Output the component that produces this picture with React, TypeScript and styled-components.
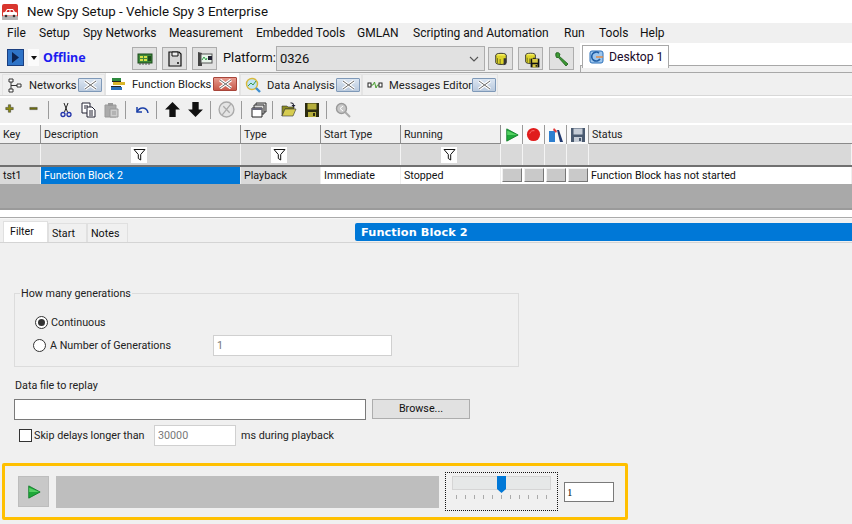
import React from "react";
import styled, { createGlobalStyle } from "styled-components";

const Global = createGlobalStyle`
  html, body { margin: 0; padding: 0; background: #f0f0f0; }
  body { width: 852px; height: 524px; overflow: hidden; font-family: Roboto, "Noto Sans", "Liberation Sans", sans-serif; font-size: 11px; color: #111; }
  * { box-sizing: border-box; }
`;

const Page = styled.div`width: 852px; height: 524px; display: flex; flex-direction: column; overflow: hidden; background: #f0f0f0;`;
const TitleBar = styled.div`height: 23px; background: #fff; display: flex; align-items: center; padding-left: 2px; gap: 9px; font-size: 13.3px; color: #111;`;
const Menu = styled.div`height: 20px; display: flex; align-items: center; padding-left: 7px; font-size: 12px; background: #f0f0f0;`;
const MenuItem = styled.span<{ $w: number }>`width: ${p => p.$w}px; white-space: nowrap;`;

const MainBar = styled.div`height: 30px; position: relative; display: flex; background: #f0f0f0; border-bottom: 1px solid #a8a8a8;`;
const MainLeft = styled.div`width: 580px; display: flex; align-items: flex-start; padding: 3px 0 0 7px;`;
const PlayBox = styled.div`width: 17px; height: 17px; margin-top: 3px; background: #2f74c8; border: 1px solid #1b3f80; display: flex; align-items: center; justify-content: center;`;
const Drop = styled.div`width: 11px; height: 17px; margin: 3px 0 0 4px; background: #fbfbfb; display: flex; align-items: center; justify-content: center;`;
const Caret = styled.span`width: 0; height: 0; border: 3.5px solid transparent; border-top: 4px solid #111; border-bottom: 0;`;
const Offline = styled.span`font: bold 12.5px "Noto Sans", sans-serif; color: #1c1cf0; margin: 3px 0 0 4px; width: 89px; line-height: 18px;`;
const ToolBtn = styled.div<{ $ml?: number }>`width: 25px; height: 23px; margin-left: ${p => p.$ml ?? 5}px; margin-top: 1px; background: #e1e1e1; border: 1px solid #adadad; display: flex; align-items: center; justify-content: center;`;
const Platform = styled.span`font-size: 12.8px; margin: 3px 1px 0 6px; line-height: 18px; width: 52px; white-space: nowrap;`;
const Select = styled.div`width: 209px; height: 25px; background: #e1e1e1; border: 1px solid #adadad; display: flex; align-items: center; justify-content: space-between; padding: 0 5px 0 3px; font-size: 13px; flex-shrink: 0;`;
const DesktopArea = styled.div`flex: 1; display: flex; flex-direction: column;`;
const DesktopRow = styled.div`height: 23px; display: flex; background: #fff; border-bottom: 1px solid #a8a8a8; padding-left: 2px;`;
const DesktopTab = styled.div`width: 87px; height: 23px; margin-top: 2px; background: #fff; border: 1px solid #a8a8a8; border-bottom: 0; display: flex; align-items: center; gap: 4px; padding-left: 6px; font-size: 12.2px; color: #1a0a2a; white-space: nowrap;`;
const DesktopStep = styled.div`flex: 1; border-left: 1px solid #a8a8a8; height: 6px;`;

const TabStrip = styled.div`height: 23px; display: flex; align-items: flex-end; padding-left: 2px; background: #f0f0f0; border-bottom: 1px solid #d8d8d8;`;
const WinTab = styled.div<{ $w: number; $active?: boolean }>`width: ${p => p.$w}px; height: ${p => p.$active ? 23 : 21}px; display: flex; align-items: center; padding-left: 4px; background: ${p => p.$active ? "#fff" : "#f0f0f0"}; border: 1px solid #e4e4e4; border-bottom: 0; font-size: 11.2px; white-space: nowrap; color: #222;`;
const TabLabel = styled.span<{ $w: number }>`width: ${p => p.$w}px; padding-left: 6px;`;
const CloseX = styled.span<{ $red?: boolean }>`width: 24px; height: 14px; border: 1px solid ${p => p.$red ? "#a8453a" : "#7f99b8"}; border-radius: 1px; background: ${p => p.$red ? "linear-gradient(#e69a8e,#c7584a)" : "linear-gradient(#dbe5f1,#b9c9dd)"}; display: flex; align-items: center; justify-content: center;`;
const Spacer = styled.div`height: 2px; background: #fff;`;

const IconBar = styled.div`height: 25px; display: flex; align-items: center; background: #f0f0f0; padding-bottom: 2px;`;
const IconSlot = styled.div<{ $w?: number }>`width: ${p => p.$w ?? 23}px; display: flex; align-items: center; justify-content: center; height: 22px;`;
const Sep = styled.div<{ $ml?: number; $mr: number }>`width: 1px; height: 18px; background: #9a9a9a; margin: 0 ${p => p.$mr}px 0 ${p => p.$ml ?? 0}px;`;
const WhiteLine = styled.div`height: 2px; background: #fff;`;

const cols = "41px 200px 80px 80px 100px 22px 22px 22px 22px 1fr";
const Grid = styled.div`display: grid; grid-template-columns: ${cols};`;
const HeadRow = styled(Grid)`height: 19px; background: #f0f0f0; border-bottom: 1px solid #8a8a8a;`;
const HeadCell = styled.div`border-right: 1px solid #8f8f8f; padding: 1px 0 0 3px; line-height: 18px; font-size: 10.7px; color: #222; display: flex; align-items: center;`;
const StatusHead = styled(HeadCell)`border-right: 0;`;
const IconHead = styled(HeadCell)`padding: 0; justify-content: center; background: #fafafa; border-right: 1px solid #9a9a9a;`;
const FilterRow = styled(Grid)`height: 23px; background: #d9d9d9; border-bottom: 2px solid #707070;`;
const FilterCell = styled.div`border-right: 1px solid #f4f4f4; display: flex; align-items: center; justify-content: center; padding-right: 3px;`;
const FilterBtn = styled.div`width: 16px; height: 16px; background: #fff; display: flex; align-items: center; justify-content: center;`;
const DataRow = styled(Grid)`height: 17px; background: #fff; border-bottom: 1px solid #707070;`;
const DataCell = styled.div<{ $bg?: string; $fg?: string }>`background: ${p => p.$bg ?? "#fff"}; color: ${p => p.$fg ?? "#111"}; border-right: 1px solid #eee; padding: 1px 0 0 3px; line-height: 16px; font-size: 10.7px; white-space: nowrap;`;
const StatusCell = styled(DataCell)`padding-left: 2px;`;
const BtnCell = styled.div`background: #fff; display: flex; padding: 1px;`;
const RowBtn = styled.div`flex: 1; height: 14px; background: #c9c9c9; border: 1px solid; border-color: #f0f0f0 #777 #777 #f0f0f0;`;
const GrayFill = styled.div`height: 26px; background: #a9a9a9; border-bottom: 2px solid #9a9a9a;`;
const WhiteGap = styled.div`height: 7px; background: #fff;`;
const Divider = styled.div`height: 1px; background: #aaa;`;
const WhiteGap2 = styled.div`height: 1px; background: #f7f7f7;`;

const LowerTabs = styled.div`height: 23px; display: flex; align-items: flex-end; padding-left: 3px;`;
const LowerTab = styled.div<{ $w: number; $active?: boolean }>`width: ${p => p.$w}px; height: ${p => p.$active ? 21 : 19}px; background: ${p => p.$active ? "#fff" : "#f0f0f0"}; border: 1px solid #e0e0e0; border-bottom: 0; font-size: 10.7px; display: flex; align-items: center; padding-left: ${p => p.$active ? 6 : 3}px; color: #111; padding-bottom: ${p => p.$active ? 1 : 0}px;`;
const BlueTitle = styled.div`margin-left: 227px; margin-bottom: 1px; flex: 1; height: 18px; background: #0078d7; border-radius: 2px 0 0 2px; color: #fff; font: bold 11.3px "DejaVu Sans", sans-serif; padding-left: 6px; line-height: 19px; letter-spacing: 0.1px;`;
const TabLine = styled.div`height: 1px; background: #d4d4d4;`;

const Body = styled.div`flex: 1; padding: 43px 0 0 0; display: flex; flex-direction: column;`;
const Group = styled.fieldset`margin: 0 0 0 14px; width: 505px; height: 81px; border: 1px solid #dcdcdc; padding: 0;`;
const Legend = styled.legend`margin-left: 5px; padding: 1px 1px 0; font-size: 10.75px; line-height: 14px; color: #222;`;
const RadioRow = styled.div<{ $mt: number; $ml: number }>`display: flex; align-items: center; margin: ${p => p.$mt}px 0 0 ${p => p.$ml}px; height: 22px; font-size: 10.75px; color: #222;`;
const Radio = styled.span`width: 13px; height: 13px; border-radius: 50%; border: 1px solid #333; background: #fff; display: flex; align-items: center; justify-content: center; margin-right: 3px; flex-shrink: 0;`;
const Dot = styled.span`width: 7px; height: 7px; border-radius: 50%; background: #333;`;
const GenLabel = styled.span`width: 164px; padding-left: 1px;`;
const GrayInput = styled.div<{ $w: number; $h: number }>`width: ${p => p.$w}px; height: ${p => p.$h}px; background: #fff; border: 1px solid #d0d0d0; color: #777; font-size: 10.75px; padding-left: 3px; line-height: ${p => p.$h - 2}px; flex-shrink: 0;`;
const FileLabel = styled.div`margin: 11px 0 0 15px; padding-top: 1px; font-size: 10.75px; line-height: 14px; color: #222; height: 21px;`;
const FileRow = styled.div`display: flex; margin-left: 14px; gap: 6px;`;
const FileInput = styled.div`width: 352px; height: 21px; background: #fff; border: 1px solid #7a7a7a;`;
const Browse = styled.div`width: 98px; height: 20px; background: #e1e1e1; border: 1px solid #adadad; text-align: center; font-size: 10.75px; line-height: 18px; color: #111;`;
const SkipRow = styled.div`display: flex; align-items: center; margin: 4px 0 0 19px; height: 22px; font-size: 10.75px; color: #222;`;
const Check = styled.span`width: 13px; height: 13px; background: #fff; border: 1px solid #333; margin-right: 2px;`;
const SkipLabel = styled.span`width: 120px;`;
const MsLabel = styled.span`margin-left: 5px;`;

const Player = styled.div`margin: 17px 0 0 2px; width: 626px; height: 57px; border: 3px solid #ffc000; border-radius: 2px; display: flex; align-items: center; padding-left: 13px;`;
const PlayBtn = styled.div`width: 31px; height: 31px; background: #c8c8c8; border: 1px solid #bdbdbd; display: flex; align-items: center; justify-content: center;`;
const Progress = styled.div`width: 383px; height: 32px; margin-left: 7px; background: #bebebe;`;
const SliderBox = styled.div`width: 113px; height: 39px; margin-left: 6px; border: 1px dotted #111; padding: 3px 6px; position: relative;`;
const Track = styled.div`height: 14px; background: #e6e8e8; border: 1px solid #d5d5d5; margin-bottom: 5px;`;
const Thumb = styled.svg`position: absolute; left: 51px; top: 3px;`;
const Ticks = styled.div`display: flex; justify-content: space-between; padding: 0 4px;`;
const Tick = styled.span`width: 1px; height: 4px; background: #aaa;`;
const Num = styled.div`width: 50px; height: 20px; margin-left: 6px; background: #fff; border: 1px solid #7a7a7a; padding-left: 2px; font: 11px "Liberation Serif", serif; line-height: 18px; color: #111;`;
const Stack = styled.span`display: flex; position: relative;`;
const MiniDisk = styled.span`position: absolute; right: -3px; bottom: -3px; display: flex;`;

const I = ({ s = 16, children }: { s?: number; children: React.ReactNode }) => (
  <svg width={s} height={s} viewBox="0 0 16 16">{children}</svg>
);
const XIcon = () => (
  <svg width="15" height="10" viewBox="0 0 15 10"><path d="M2 1 L13 9 M13 1 L2 9" stroke="#fff" strokeWidth="3.2" /><path d="M2 1 L13 9 M13 1 L2 9" stroke="#6a6a6a" strokeWidth="1" /></svg>
);
const Disk = ({ c = "#111", f = "#b9b08a", s = 16 }: { c?: string; f?: string; s?: number }) => (
  <I s={s}><path d="M1 1h14v14H1z" fill={c} /><path d="M3.5 1.5h9v6h-9z" fill={f} /><path d="M4 10h8v5H4z" fill={f} /><path d="M9 11h2v3H9z" fill={c} /></I>
);
const Drum = ({ s = 14 }: { s?: number }) => (
  <I s={s}><ellipse cx="8" cy="4" rx="6" ry="2.5" fill="#f5ee60" stroke="#222" /><path d="M2 4v8c0 3 12 3 12 0V4" fill="#dcd32a" stroke="#222" /><path d="M4 7v6M7 8v6" stroke="#6a6a20" /><path d="M11 7h3v7l-3 1z" fill="#333" /></I>
);
const Funnel = () => (
  <svg width="13" height="13" viewBox="0 0 13 13"><path d="M1 1.5h11L7.7 6.5V12L5.3 10.5v-4z" fill="#fff" stroke="#111" /></svg>
);
const GreenPlay = ({ s = 14 }: { s?: number }) => (
  <I s={s}><path d="M2 1 L15 8 L2 15z" fill="#1fa83a" stroke="#0f7d28" /><path d="M2.5 3 L2.5 8 L14 8z" fill="#54d062" /></I>
);

export default function App() {
  const menu: [string, number][] = [["File", 32], ["Setup", 44], ["Spy Networks", 86], ["Measurement", 87], ["Embedded Tools", 101], ["GMLAN", 56], ["Scripting and Automation", 151], ["Run", 35], ["Tools", 41], ["Help", 40]];
  return (
    <Page>
      <Global />
      <TitleBar>
        <svg width="16" height="16" viewBox="0 0 16 16"><rect width="16" height="16" rx="2" fill="#d9362e" /><rect x="0" y="12" width="16" height="4" rx="1" fill="#b5b5b5" /><path d="M1 11.5V8.5l2-.5 2-3h6l2 3 2 .5v3z" fill="#fff" /><path d="M5.5 6h2v2h-3zM8.5 6h2l1 2h-3z" fill="#c22" /><circle cx="4" cy="12" r="1.3" fill="#333" /><circle cx="12" cy="12" r="1.3" fill="#333" /></svg>
        <span>New Spy Setup - Vehicle Spy 3 Enterprise</span>
      </TitleBar>
      <Menu>{menu.map(([m, w]) => <MenuItem key={m} $w={w}>{m}</MenuItem>)}</Menu>
      <MainBar>
        <MainLeft>
          <PlayBox><svg width="9" height="11" viewBox="0 0 9 11"><path d="M1 0l7 5.5L1 11z" fill="#0d2350" /></svg></PlayBox>
          <Drop><Caret /></Drop>
          <Offline>Offline</Offline>
          <ToolBtn $ml={0}>
            <I><rect x="1" y="3" width="14" height="9" fill="#3f8a3a" stroke="#1d4a1d" /><path d="M3 5h3v2H3zM7 5h3v2H7zM3 8h3v2H3zM7 8h3v2H7z" fill="#d7e04a" /><path d="M11 5h3v5h-3z" fill="#1d4a1d" /><path d="M3 12v2M6 12v2M9 12v2M12 12v2" stroke="#555" /></I>
          </ToolBtn>
          <ToolBtn>
            <I><path d="M2 1h10l2 2v12H2z" fill="#d6d6d6" stroke="#111" strokeWidth="1.2" /><path d="M5 1h6v4H5z" fill="#eee" stroke="#111" /><circle cx="11" cy="12" r="1" fill="#111" /></I>
          </ToolBtn>
          <ToolBtn>
            <I><path d="M1 1l4 1v13l-4 0z" fill="#444" /><rect x="4" y="3" width="11" height="9" fill="#e8f3ea" stroke="#555" /><path d="M5 9l2-3 2 3 1-2" stroke="#2aa044" fill="none" /><rect x="11" y="5" width="4" height="4" fill="#223" /></I>
          </ToolBtn>
          <Platform>Platform:</Platform>
          <Select>
            <span>0326</span>
            <svg width="10" height="6" viewBox="0 0 10 6"><path d="M1 1l4 4 4-4" fill="none" stroke="#555" strokeWidth="1.1" /></svg>
          </Select>
          <ToolBtn $ml={3}><Drum /></ToolBtn>
          <ToolBtn><Stack><Drum s={13} /><MiniDisk><Disk s={10} c="#111" f="#d8c840" /></MiniDisk></Stack></ToolBtn>
          <ToolBtn $ml={6}>
            <I><path d="M2 2c2-1 4 0 4 2l-1 1 9 8-2 2-8-9-1 1C3 7 1 5 2 2z" fill="#3d9a34" stroke="#1d5a1a" strokeWidth="0.8" /></I>
          </ToolBtn>
        </MainLeft>
        <DesktopArea>
          <DesktopRow>
            <DesktopTab>
              <I><rect x="1" y="2" width="13" height="12" rx="2" fill="#9cc6ee" stroke="#2a6fb8" /><path d="M10 4a4.5 4.5 0 1 0 1 6" fill="none" stroke="#1f5ea5" strokeWidth="1.6" /><path d="M7 8h7" stroke="#e9883a" strokeWidth="1.4" /></I>
              Desktop 1
            </DesktopTab>
          </DesktopRow>
          <DesktopStep />
        </DesktopArea>
      </MainBar>
      <TabStrip>
        <WinTab $w={103}>
          <I><path d="M2 2h4v3H2zM10 7h4v3h-4zM2 12h4v3H2z" fill="#fff" stroke="#333" /><path d="M4 5v7M4 8.5h6" stroke="#333" fill="none" /></I>
          <TabLabel $w={55}>Networks</TabLabel><CloseX><XIcon /></CloseX>
        </WinTab>
        <WinTab $w={135} $active>
          <I><path d="M2 2h9v3H2z" fill="#2d8a3e" /><path d="M3 6h12v3H3z" fill="#d9b52a" /><path d="M1 11h11v3H1z" fill="#2a6fb8" /><path d="M2 5h9v1H2zM1 10h10v1H1z" fill="#222" /></I>
          <TabLabel $w={87}>Function Blocks</TabLabel><CloseX $red><XIcon /></CloseX>
        </WinTab>
        <WinTab $w={122}>
          <I><circle cx="7" cy="7" r="5.5" fill="#bfe3f5" stroke="#d7b93c" strokeWidth="1.4" /><path d="M3 9l3-3 2 2 3-4" stroke="#3a9a4a" fill="none" /><path d="M11 11l4 4" stroke="#3d8fd0" strokeWidth="2.4" /></I>
          <TabLabel $w={75}>Data Analysis</TabLabel><CloseX><XIcon /></CloseX>
        </WinTab>
        <WinTab $w={136}>
          <I><path d="M4 8h2l1.5-3L9 11l1.5-3H12" stroke="#4aa030" fill="none" /><rect x="1" y="6" width="3" height="4" fill="#fff" stroke="#222" /><rect x="12" y="6" width="3" height="4" fill="#fff" stroke="#222" /></I>
          <TabLabel $w={89}>Messages Editor</TabLabel><CloseX><XIcon /></CloseX>
        </WinTab>
      </TabStrip>
      <Spacer />
      <IconBar>
        <IconSlot $w={21}><I s={12}><path d="M4.5 1h3v3.5H11v3H7.5V11h-3V7.5H1v-3h3.5z" fill="#8a8a10" stroke="#222" strokeWidth="0.6" /></I></IconSlot>
        <IconSlot $w={27}><I s={12}><path d="M1 4.5h10v3H1z" fill="#6b6b10" stroke="#333" strokeWidth="0.5" /></I></IconSlot>
        <Sep $mr={5} />
        <IconSlot $w={23}><I><path d="M6 1l3.5 9M10 1L6.5 10" stroke="#222" fill="none" /><circle cx="5" cy="12.5" r="2" fill="none" stroke="#2233aa" strokeWidth="1.3" /><circle cx="11" cy="12.5" r="2" fill="none" stroke="#2233aa" strokeWidth="1.3" /></I></IconSlot>
        <IconSlot $w={23}><I><path d="M1 1h8v10H1z" fill="#fff" stroke="#223" /><path d="M6 5h5l3 3v7H6z" fill="#fff" stroke="#223" /><path d="M8 9h4M8 11h4M8 13h4M3 4h4M3 6h2" stroke="#223" /></I></IconSlot>
        <IconSlot $w={22}><I><path d="M2 3h11v12H2z" fill="#aaa" stroke="#999" /><path d="M5 1h5v3H5z" fill="#999" /><path d="M7 7h8v8H7z" fill="#ccc" stroke="#999" /><path d="M9 10h4M9 12h4" stroke="#999" /></I></IconSlot>
        <Sep $ml={3} $mr={5} />
        <IconSlot $w={21}><I><path d="M3 5v5h5" fill="none" stroke="#1a3fa8" strokeWidth="1.5" /><path d="M3 10C6 4 13 5 14 11" fill="none" stroke="#1a3fa8" strokeWidth="1.5" /></I></IconSlot>
        <Sep $ml={4} $mr={4} />
        <IconSlot $w={23}><I s={17}><path d="M8 1l7 7h-4v7H5V8H1z" fill="#111" /></I></IconSlot>
        <IconSlot $w={23}><I s={17}><path d="M8 15l7-7h-4V1H5v7H1z" fill="#111" /></I></IconSlot>
        <Sep $ml={3} $mr={4} />
        <IconSlot $w={23}><I s={17}><circle cx="8" cy="8" r="7" fill="#e4e4e4" stroke="#aaa" strokeWidth="1.3" /><path d="M4 13L12 3M5 5l6 6" stroke="#aaa" strokeWidth="1.2" /></I></IconSlot>
        <Sep $ml={3} $mr={6} />
        <IconSlot $w={22}><I><path d="M5 1h10v9H5z" fill="#d8d8d8" stroke="#333" /><path d="M3 3h10v9H3z" fill="#d8d8d8" stroke="#333" /><path d="M1 6h10v9H1z" fill="#fff" stroke="#222" /><path d="M1 6h10v2H1z" fill="#667" /></I></IconSlot>
        <Sep $ml={2} $mr={4} />
        <IconSlot $w={23}><I><path d="M1 4h5l1 1h6v2H4l-3 7z" fill="#8b8b20" stroke="#333" strokeWidth="0.6" /><path d="M4 7h11l-3 7H1z" fill="#d6cc50" stroke="#333" strokeWidth="0.6" /><path d="M9 1c2-1 4 0 4 2h1.5L12.5 5.5 10.5 3H12c0-1-1-1.5-3-2z" fill="#223" /></I></IconSlot>
        <IconSlot $w={23}><Disk c="#2b2b10" f="#b5ae3c" /></IconSlot>
        <Sep $ml={3} $mr={5} />
        <IconSlot $w={22}><I><circle cx="6.5" cy="6.5" r="5" fill="#c8c8c8" stroke="#999" strokeWidth="1.4" /><path d="M10 10l5 5" stroke="#aaa" strokeWidth="2" /><path d="M8 4L5 6.5 8 9" fill="none" stroke="#fff" /></I></IconSlot>
      </IconBar>
      <WhiteLine />
      <HeadRow>
        <HeadCell>Key</HeadCell><HeadCell>Description</HeadCell><HeadCell>Type</HeadCell><HeadCell>Start Type</HeadCell><HeadCell>Running</HeadCell>
        <IconHead><GreenPlay /></IconHead>
        <IconHead><I s={15}><circle cx="8" cy="8" r="7" fill="#e01c1c" /><path d="M4 7a4 4 0 0 1 5-3" stroke="#f77" fill="none" /></I></IconHead>
        <IconHead><I><path d="M1 4h6v11H1z" fill="#2d7fd0" /><path d="M9 3l2 0 4 12h-3z" fill="#223a70" /><path d="M6 1l3 3-1 2-3-3z" fill="#e03a3a" /></I></IconHead>
        <IconHead><Disk c="#4a5a70" f="#c5ccd6" /></IconHead>
        <StatusHead>Status</StatusHead>
      </HeadRow>
      <FilterRow>
        <FilterCell />
        <FilterCell><FilterBtn><Funnel /></FilterBtn></FilterCell>
        <FilterCell><FilterBtn><Funnel /></FilterBtn></FilterCell>
        <FilterCell />
        <FilterCell><FilterBtn><Funnel /></FilterBtn></FilterCell>
        <FilterCell /><FilterCell /><FilterCell /><FilterCell /><FilterCell />
      </FilterRow>
      <DataRow>
        <DataCell $bg="#d9d9d9">tst1</DataCell>
        <DataCell $bg="#0078d7" $fg="#fff">Function Block 2</DataCell>
        <DataCell $bg="#d9d9d9">Playback</DataCell>
        <DataCell>Immediate</DataCell>
        <DataCell>Stopped</DataCell>
        <BtnCell><RowBtn /></BtnCell><BtnCell><RowBtn /></BtnCell><BtnCell><RowBtn /></BtnCell><BtnCell><RowBtn /></BtnCell>
        <StatusCell>Function Block has not started</StatusCell>
      </DataRow>
      <GrayFill />
      <WhiteGap />
      <Divider />
      <WhiteGap2 />
      <LowerTabs>
        <LowerTab $w={45} $active>Filter</LowerTab>
        <LowerTab $w={39}>Start</LowerTab>
        <LowerTab $w={41}>Notes</LowerTab>
        <BlueTitle>Function Block 2</BlueTitle>
      </LowerTabs>
      <TabLine />
      <Body>
        <Group>
          <Legend>How many generations</Legend>
          <RadioRow $mt={10} $ml={20}><Radio><Dot /></Radio>Continuous</RadioRow>
          <RadioRow $mt={1} $ml={18}><Radio />
            <GenLabel>A Number of Generations</GenLabel>
            <GrayInput $w={179} $h={21}>1</GrayInput>
          </RadioRow>
        </Group>
        <FileLabel>Data file to replay</FileLabel>
        <FileRow><FileInput /><Browse>Browse...</Browse></FileRow>
        <SkipRow>
          <Check /><SkipLabel>Skip delays longer than</SkipLabel>
          <GrayInput $w={82} $h={21}>30000</GrayInput>
          <MsLabel>ms during playback</MsLabel>
        </SkipRow>
        <Player>
          <PlayBtn><GreenPlay s={14} /></PlayBtn>
          <Progress />
          <SliderBox>
            <Track />
            <Ticks>{Array.from({ length: 11 }).map((_, i) => <Tick key={i} />)}</Ticks>
            <Thumb width="9" height="18" viewBox="0 0 9 18"><path d="M0 0h9v13l-4.5 4L0 13z" fill="#0078d7" /></Thumb>
          </SliderBox>
          <Num>1</Num>
        </Player>
      </Body>
    </Page>
  );
}
